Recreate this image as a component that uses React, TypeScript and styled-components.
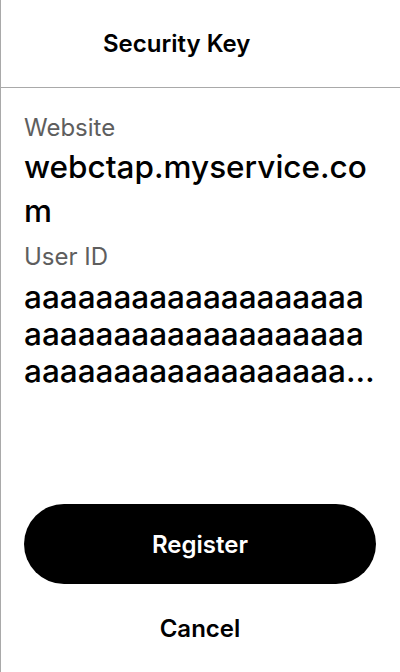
import React from 'react';
import styled, { createGlobalStyle } from 'styled-components';

const Global = createGlobalStyle`
  html, body { margin: 0; padding: 0; background: #fff; }
  body { font-family: Inter, "Noto Sans", sans-serif; color: #000; }
`;

const Sheet = styled.div`
  box-sizing: border-box;
  width: 400px;
  height: 672px;
  border-left: 1px solid #a9a9a9;
  display: flex;
  flex-direction: column;
`;

const Header = styled.header`
  height: 87px;
  border-bottom: 1px solid #a9a9a9;
  display: flex;
  align-items: center;
  padding-left: 102px;
`;

const Title = styled.h1`
  margin: 0;
  font-size: 24px;
  font-weight: 600;
`;

const Body = styled.main`
  flex: 1;
  display: flex;
  flex-direction: column;
  padding: 25px 24px 0 23px;
`;

const Label = styled.div<{ $gap?: number }>`
  font-size: 24px;
  line-height: 29px;
  color: #5e5e5e;
  margin-top: ${p => p.$gap ?? 0}px;
`;

const Value = styled.div<{ $lines: number; $lh: number; $gap: number }>`
  font-size: 31.5px;
  font-weight: 500;
  line-height: ${p => p.$lh}px;
  margin-top: ${p => p.$gap}px;
  word-break: break-all;
  display: -webkit-box;
  -webkit-box-orient: vertical;
  -webkit-line-clamp: ${p => p.$lines};
  overflow: hidden;
`;

const Actions = styled.div`
  margin-top: auto;
  display: flex;
  flex-direction: column;
`;

const Primary = styled.button`
  height: 80px;
  border: 0;
  border-radius: 40px;
  background: #000;
  color: #fff;
  font: 600 24px Inter, sans-serif;
  cursor: pointer;
`;

const Secondary = styled.button`
  height: 88px;
  border: 0;
  background: none;
  color: #000;
  font: 600 24px Inter, sans-serif;
  cursor: pointer;
`;

export default function App() {
  return (
    <Sheet>
      <Global />
      <Header>
        <Title>Security Key</Title>
      </Header>
      <Body>
        <Label>Website</Label>
        <Value $lines={2} $lh={44} $gap={3}>webctap.myservice.com</Value>
        <Label $gap={9}>User ID</Label>
        <Value $lines={3} $lh={37} $gap={7}>{'a'.repeat(80)}</Value>
        <Actions>
          <Primary>Register</Primary>
          <Secondary>Cancel</Secondary>
        </Actions>
      </Body>
    </Sheet>
  );
}
